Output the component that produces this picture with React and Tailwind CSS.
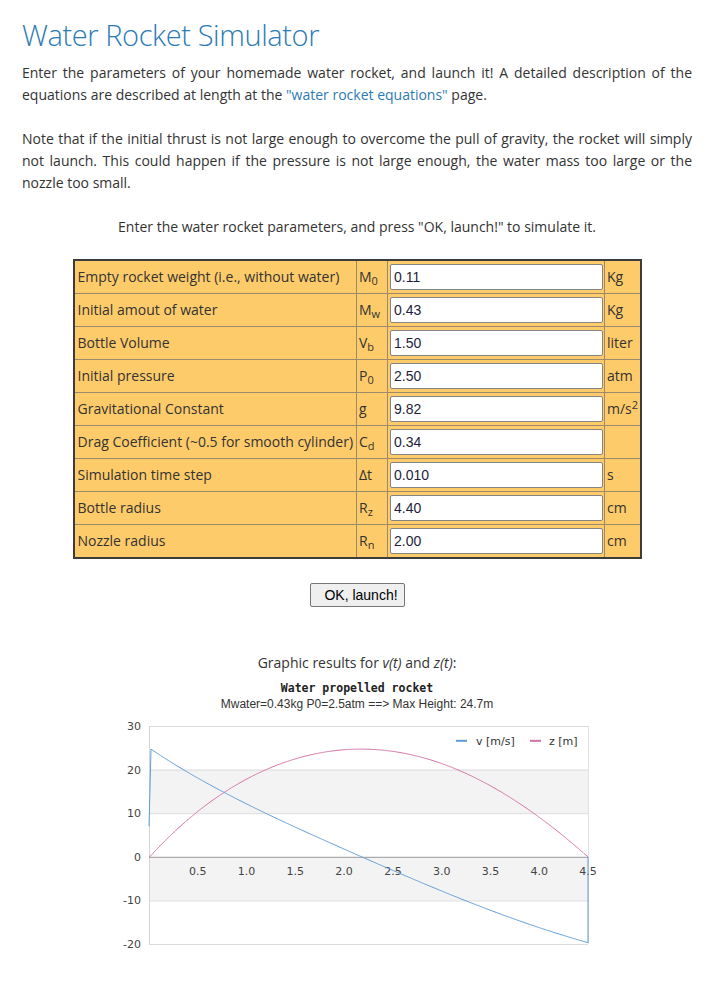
import React from 'react'

const rows = [
  { label: 'Empty rocket weight (i.e., without water)', sym: 'M', sub: '0', value: '0.11', unit: 'Kg' },
  { label: 'Initial amout of water', sym: 'M', sub: 'w', value: '0.43', unit: 'Kg' },
  { label: 'Bottle Volume', sym: 'V', sub: 'b', value: '1.50', unit: 'liter' },
  { label: 'Initial pressure', sym: 'P', sub: '0', value: '2.50', unit: 'atm' },
  { label: 'Gravitational Constant', sym: 'g', value: '9.82', unit: 'm/s', sup: '2' },
  { label: 'Drag Coefficient (~0.5 for smooth cylinder)', sym: 'C', sub: 'd', value: '0.34', unit: '' },
  { label: 'Simulation time step', sym: 'Δt', value: '0.010', unit: 's' },
  { label: 'Bottle radius', sym: 'R', sub: 'z', value: '4.40', unit: 'cm' },
  { label: 'Nozzle radius', sym: 'R', sub: 'n', value: '2.00', unit: 'cm' },
]

// simple drag model, rescaled to the reported flight
function simulate() {
  const g = 9.82
  const k = 0.0085
  let t = 0.02
  let v = 24.7
  let z = 0.3
  const pts = [{ t: 0, v: 7, z: 0 }, { t, v, z }]
  const dt = 0.01
  while (z > 0 && t < 10) {
    const a = -g - k * v * Math.abs(v)
    v += a * dt
    z += v * dt
    t += dt
    pts.push({ t, v, z: Math.max(z, 0) })
  }
  const T = t
  const zMax = Math.max(...pts.map((p) => p.z))
  const vMin = Math.min(...pts.map((p) => p.v))
  return pts.map((p, i) => ({
    t: i === 0 ? 0 : i === 1 ? 0.02 : (p.t / T) * 4.5,
    z: (p.z / zMax) * 24.7,
    v: p.v < 0 ? (p.v / vMin) * -19.7 : p.v,
  }))
}

const X = (t) => 42 + t * 97.56
const Y = (v) => 10 + (30 - v) * 4.36

function Chart() {
  const pts = simulate()
  const vLine = pts.map((p) => `${X(p.t).toFixed(1)},${Y(p.v).toFixed(1)}`).join(' ') + ` ${X(4.5)},${Y(0)}`
  const zLine = pts.map((p) => `${X(p.t).toFixed(1)},${Y(p.z).toFixed(1)}`).join(' ')
  const xTicks = ['0.5', '1.0', '1.5', '2.0', '2.5', '3.0', '3.5', '4.0', '4.5']
  const yTicks = [30, 20, 10, 0, -10, -20]
  return (
    <svg width="500" height="262" className="block" style={{ fontFamily: '"DejaVu Sans", sans-serif' }}>
      <rect x={X(0)} y={Y(20)} width={X(4.5) - X(0)} height={Y(10) - Y(20)} fill="#f3f3f3" />
      <rect x={X(0)} y={Y(0)} width={X(4.5) - X(0)} height={Y(-10) - Y(0)} fill="#f3f3f3" />
      {[30, 20, 10, -10, -20].map((v) => (
        <line key={v} x1={X(0)} x2={X(4.5)} y1={Y(v) + 0.5} y2={Y(v) + 0.5} stroke="#dcdcdc" />
      ))}
      <line x1={X(0) + 0.5} x2={X(0) + 0.5} y1={Y(30)} y2={Y(-20)} stroke="#d6d6d6" />
      <line x1={X(4.5) + 0.5} x2={X(4.5) + 0.5} y1={Y(30)} y2={Y(-20)} stroke="#e2e2e2" />
      <line x1={X(0)} x2={X(4.5)} y1={Y(0) + 0.5} y2={Y(0) + 0.5} stroke="#9a9a9a" />
      {yTicks.map((v) => (
        <text key={v} x="34" y={Y(v) + 4} textAnchor="end" fontSize="11" fill="#444">{v}</text>
      ))}
      {xTicks.map((l, i) => (
        <text key={l} x={X((i + 1) * 0.5)} y={Y(0) + 18} textAnchor="middle" fontSize="11" fill="#444">{l}</text>
      ))}
      <polyline points={zLine} fill="none" stroke="#d472a6" strokeWidth="1" />
      <polyline points={vLine} fill="none" stroke="#5f9cd6" strokeWidth="1" />
      <line x1="349" x2="360" y1={Y(26.6)} y2={Y(26.6)} stroke="#5f9cd6" strokeWidth="2" />
      <text x="369" y={Y(26.6) + 4} fontSize="11" fill="#333">v [m/s]</text>
      <line x1="423" x2="434" y1={Y(26.6)} y2={Y(26.6)} stroke="#d472a6" strokeWidth="2" />
      <text x="442" y={Y(26.6) + 4} fontSize="11" fill="#333">z [m]</text>
    </svg>
  )
}

export default function App() {
  return (
    <div className="bg-white min-h-[1006px] pl-[22px] pr-[31px] text-[14px] leading-[22px] text-[#333]" style={{ fontFamily: '"Open Sans", sans-serif' }}>
      <h1 className="pt-[17px] text-[29px] leading-[36px] font-light tracking-[-0.4px] text-[#2b7bb5] mb-[9px]">Water Rocket Simulator</h1>
      <p className="text-justify mb-[22px]">
        Enter the parameters of your homemade water rocket, and launch it! A detailed description of the equations are described at length at the{' '}
        <a className="text-[#2b7bb5]">"water rocket equations"</a> page.
      </p>
      <p className="text-justify mb-[22px]">
        Note that if the initial thrust is not large enough to overcome the pull of gravity, the rocket will simply not launch. This could happen if the pressure is not large enough, the water mass too large or the nozzle too small.
      </p>
      <p className="text-center">Enter the water rocket parameters, and press "OK, launch!" to simulate it.</p>

      <table className="mx-auto mt-[21px] w-[569px] table-fixed border-collapse border-2 border-[#3c3c3c] bg-[#fecb6a]">
        <tbody>
          {rows.map((r, i) => (
            <tr key={i} className="h-[33px]">
              <td className={`${i === 0 ? 'w-[283px]' : ''} border border-[#9c8a6a] pl-[3px] whitespace-nowrap`}>{r.label}</td>
              <td className={`${i === 0 ? 'w-[31px]' : ''} border border-[#9c8a6a] pl-[2px] whitespace-nowrap`}>
                {r.sym}
                {r.sub && <sub className="text-[11px]">{r.sub}</sub>}
              </td>
              <td className={`${i === 0 ? 'w-[217px]' : ''} border border-[#9c8a6a] px-[2px] py-[3px]`}>
                <input
                  readOnly
                  value={r.value}
                  className="block w-[213px] h-[26px] bg-white border border-[#858585] rounded-[2px] px-[3px] text-[14px] text-[#1e1e3c]"
                  style={{ fontFamily: '"Liberation Sans", Arial, sans-serif' }}
                />
              </td>
              <td className="border border-[#9c8a6a] pl-[2px] whitespace-nowrap">
                {r.unit}
                {r.sup && <sup className="text-[11px]">{r.sup}</sup>}
              </td>
            </tr>
          ))}
        </tbody>
      </table>

      <div className="flex justify-center mt-[24px]">
        <button
          className="h-[24px] w-[95px] pl-[8px] bg-[#efefef] border border-[#767676] rounded-[2px] text-[14px] text-black"
          style={{ fontFamily: '"Liberation Sans", Arial, sans-serif' }}
        >
          OK, launch!
        </button>
      </div>

      <p className="text-center mt-[45px]">
        Graphic results for <i>v(t)</i> and <i>z(t)</i>:
      </p>
      <div className="flex flex-col items-center">
        <div className="mt-[6px] text-[11.5px] leading-[16px] font-bold text-[#222]" style={{ fontFamily: '"DejaVu Sans Mono", monospace' }}>
          Water propelled rocket
        </div>
        <div className="text-[12px] leading-[16px] text-[#333]" style={{ fontFamily: '"Liberation Sans", Arial, sans-serif' }}>
          Mwater=0.43kg P0=2.5atm ==&gt; Max Height: 24.7m
        </div>
        <div className="mt-[4px] w-[500px]">
          <Chart />
        </div>
      </div>
    </div>
  )
}
